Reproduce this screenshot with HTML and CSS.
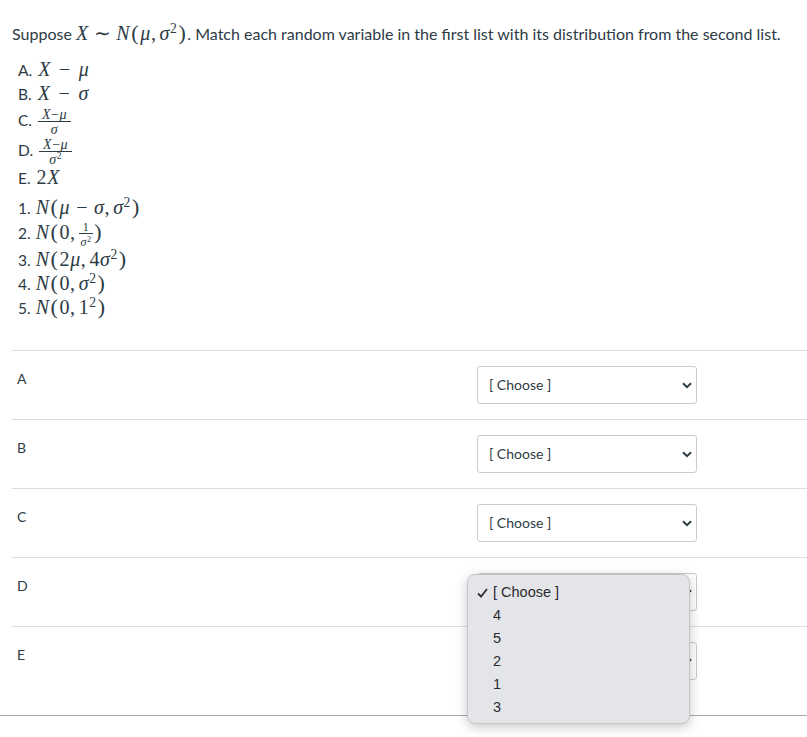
FILE: index.html
```html
<!DOCTYPE html>
<html lang="en">

<head>
  <meta charset="UTF-8">
  <meta name="viewport" content="width=device-width, initial-scale=1.0">
  <title>Matching Question</title>
  <link rel="stylesheet" href="styles.css">
</head>

<body>
  <div class="question">
    <p class="intro">Suppose <span class="m"><i>X</i><span class="rel">∼</span><i>N</i><span class="p">(</span><i>μ</i>,<i class="sp">σ</i><sup>2</sup><span class="p">)</span></span>. Match each random variable in the first list with its distribution from the second list.</p>

    <div class="list first-list">
      <div class="line">A. <span class="m"><i>X</i><span class="bin">−</span><i>μ</i></span></div>
      <div class="line">B. <span class="m"><i>X</i><span class="bin">−</span><i>σ</i></span></div>
      <div class="line line-c">C. <span class="frac"><span class="num"><i>X</i>−<i>μ</i></span><span class="den"><i>σ</i></span></span></div>
      <div class="line line-d">D. <span class="frac"><span class="num"><i>X</i>−<i>μ</i></span><span class="den"><i>σ</i><sup>2</sup></span></span></div>
      <div class="line">E. <span class="m">2<i>X</i></span></div>
    </div>

    <div class="list second-list">
      <div class="line">1. <span class="m"><i>N</i><span class="p">(</span><i>μ</i><span class="bin">−</span><i>σ</i>,<i class="sp">σ</i><sup>2</sup><span class="p">)</span></span></div>
      <div class="line line-2">2. <span class="m"><i>N</i><span class="p">(</span>0,<span class="frac small"><span class="num">1</span><span class="den"><i>σ</i><sup>2</sup></span></span><span class="p">)</span></span></div>
      <div class="line">3. <span class="m"><i>N</i><span class="p">(</span>2<i>μ</i>,<span class="sp">4</span><i>σ</i><sup>2</sup><span class="p">)</span></span></div>
      <div class="line">4. <span class="m"><i>N</i><span class="p">(</span>0,<i class="sp">σ</i><sup>2</sup><span class="p">)</span></span></div>
      <div class="line">5. <span class="m"><i>N</i><span class="p">(</span>0,<span class="sp">1</span><sup>2</sup><span class="p">)</span></span></div>
    </div>

    <div class="answers">
      <div class="answer">
        <div class="answer-label">A</div>
        <div class="select">
          <span class="select-text">[ Choose ]</span>
          <svg class="chevron" width="10" height="7" viewBox="0 0 10 7"><path d="M1 1.2 5 5.2 9 1.2" fill="none" stroke="#2d3b45" stroke-width="2"/></svg>
        </div>
      </div>
      <div class="answer">
        <div class="answer-label">B</div>
        <div class="select">
          <span class="select-text">[ Choose ]</span>
          <svg class="chevron" width="10" height="7" viewBox="0 0 10 7"><path d="M1 1.2 5 5.2 9 1.2" fill="none" stroke="#2d3b45" stroke-width="2"/></svg>
        </div>
      </div>
      <div class="answer">
        <div class="answer-label">C</div>
        <div class="select">
          <span class="select-text">[ Choose ]</span>
          <svg class="chevron" width="10" height="7" viewBox="0 0 10 7"><path d="M1 1.2 5 5.2 9 1.2" fill="none" stroke="#2d3b45" stroke-width="2"/></svg>
        </div>
      </div>
      <div class="answer">
        <div class="answer-label">D</div>
        <div class="select">
          <svg class="chevron" width="10" height="7" viewBox="0 0 10 7"><path d="M1 1.2 5 5.2 9 1.2" fill="none" stroke="#2d3b45" stroke-width="2"/></svg>
          <ul class="menu">
            <li>
              <svg class="check" width="11" height="10" viewBox="0 0 11 10"><path d="M1 5.4 4 8.6 10 1" fill="none" stroke="#2b2b2e" stroke-width="1.7"/></svg>
              [ Choose ]
            </li>
            <li>4</li>
            <li>5</li>
            <li>2</li>
            <li>1</li>
            <li>3</li>
          </ul>
        </div>
      </div>
      <div class="answer answer-last">
        <div class="answer-label">E</div>
        <div class="select">
          <svg class="chevron" width="10" height="7" viewBox="0 0 10 7"><path d="M1 1.2 5 5.2 9 1.2" fill="none" stroke="#2d3b45" stroke-width="2"/></svg>
        </div>
      </div>
    </div>
  </div>
  <div class="bottom-rule"></div>
</body>

</html>
```

FILE: styles.css
```css
body {
  margin: 0;
  min-height: 737px;
  background-color: white;
  color: #2d3b45;
  font-family: Lato, "Liberation Sans", sans-serif;
  font-size: 16px;
}

.question {
  padding: 21px 0 0 12px;
}

.intro {
  margin: 0 0 1px;
  height: 24px;
  line-height: 24px;
  white-space: nowrap;
}

.m {
  font-family: "Liberation Serif", serif;
  font-size: 20px;
  letter-spacing: 0.6px;
  white-space: nowrap;
}

.line .m {
  margin-left: 1px;
}

.m i,
.frac i {
  font-style: italic;
}

.m sup,
.frac sup {
  font-size: 0.68em;
  line-height: 0;
  vertical-align: 0.55em;
}

.rel {
  margin: 0 5px;
}

.bin {
  margin: 0 6px;
}

.first-list .m {
  margin-left: 2px;
}

.first-list .bin {
  margin: 0 8px;
}

.p {
  margin: 0 1px;
  font-size: 1.1em;
}

.sp {
  margin-left: 3px;
}

.list {
  padding-left: 6px;
}

.first-list {
  margin-top: 12px;
}

.second-list {
  margin-top: 6px;
}

.line {
  height: 24px;
  line-height: 24px;
  font-size: 15.5px;
  white-space: nowrap;
}

.line-c {
  height: 30px;
  line-height: 30px;
}

.line-d {
  height: 30px;
  line-height: 30px;
}

.line-2 {
  height: 28px;
  line-height: 26px;
}

.frac {
  display: inline-flex;
  flex-direction: column;
  align-items: center;
  margin-left: 2px;
  font-family: "Liberation Serif", serif;
  font-size: 14px;
  letter-spacing: 0.5px;
  line-height: 12px;
  vertical-align: middle;
}

.num {
  padding: 0 4px;
  border-bottom: 1px solid #2d3b45;
}

.den {
  padding-top: 2px;
}

.frac.small {
  margin: 0 0 0 3px;
  font-size: 12px;
  line-height: 12px;
}

.answers {
  margin-top: 31px;
}

.answer {
  display: flex;
  justify-content: space-between;
  height: 69px;
  box-sizing: border-box;
  padding: 15px 110px 0 5px;
  border-top: 1px solid #dcdfe2;
  font-size: 14px;
}

.answer-last {
  height: 90px;
}

.answer-label {
  padding-top: 4px;
}

.select {
  position: relative;
  display: flex;
  align-items: center;
  justify-content: flex-end;
  box-sizing: border-box;
  width: 220px;
  height: 38px;
  padding: 0 4px 0 11px;
  border: 1px solid #c7cdd1;
  border-radius: 3px;
}

.select-text {
  margin-right: auto;
  padding-bottom: 2px;
}

.menu {
  position: absolute;
  z-index: 2;
  top: 0;
  left: -11px;
  width: 223px;
  height: 150px;
  box-sizing: border-box;
  margin: 0;
  padding: 6px 0 0 25px;
  list-style: none;
  background-color: #e4e5e9;
  border: 1px solid #c4c5c8;
  border-radius: 8px;
  box-shadow: 0 3px 12px rgba(0, 0, 0, 0.22);
  color: #2b2b2e;
  font-family: "Liberation Sans", sans-serif;
  font-size: 14.5px;
  line-height: 23px;
}

.menu li {
  position: relative;
  height: 23px;
}

.check {
  position: absolute;
  top: 7px;
  left: -16px;
}

.bottom-rule {
  margin-top: -1px;
  height: 1px;
  background-color: #a8a8a8;
}
```
